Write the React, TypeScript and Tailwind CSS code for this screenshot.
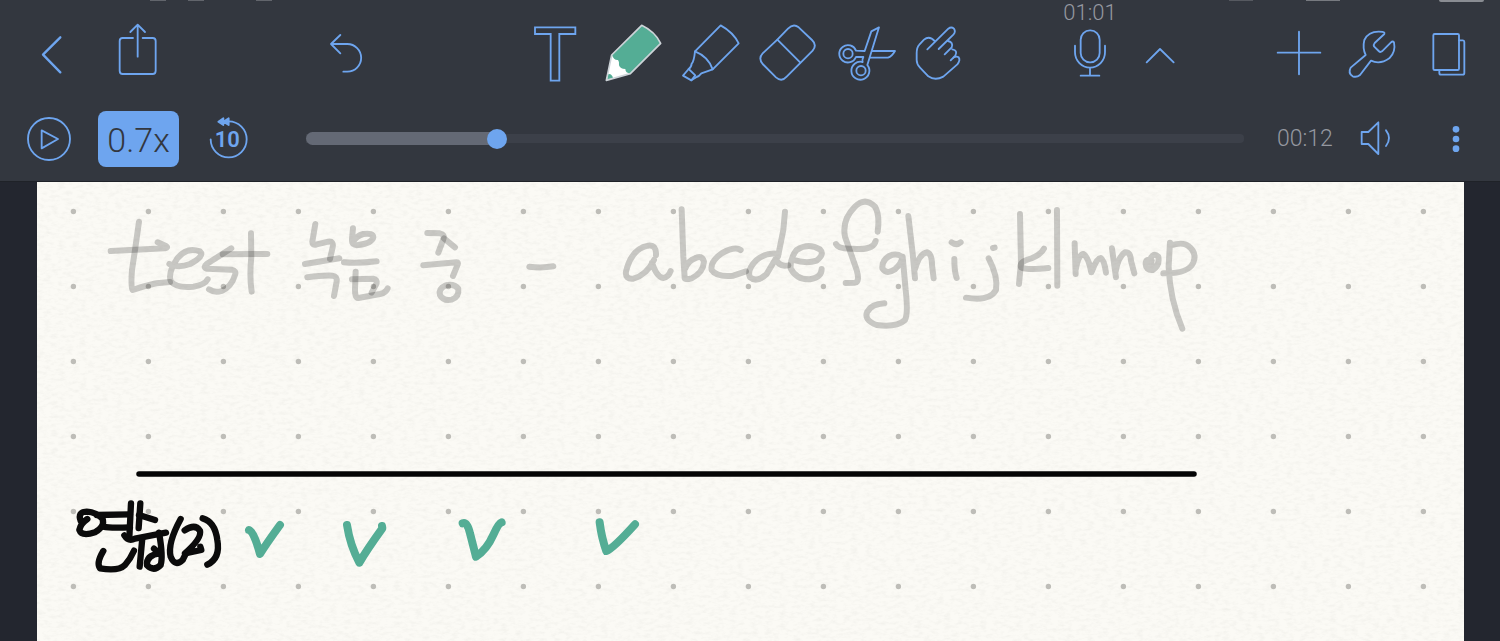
import { useState } from "react";
import type { ReactNode } from "react";

type IconProps = { box: string; children: ReactNode; className?: string };

// Toolbar glyphs share one grid: three drawing units per pixel
function Icon({ box, children, className = "h-14 w-14" }: IconProps) {
  return (
    <svg
      viewBox={box}
      fill="none"
      stroke="currentColor"
      strokeWidth="5.5"
      strokeLinecap="round"
      strokeLinejoin="round"
      aria-hidden="true"
      className={`shrink-0 overflow-visible ${className}`}
    >
      {children}
    </svg>
  );
}

type ToolButtonProps = { label: string; children: ReactNode; className?: string };

function ToolButton({ label, children, className = "w-14" }: ToolButtonProps) {
  return (
    <button type="button" aria-label={label} className={`flex shrink-0 justify-center ${className}`}>
      {children}
    </button>
  );
}

const wordStrokes = [
  "M147 95 L135 180 L126 240 Q122 290 128 300 Q175 284 200 280 L240 276",
  "M62 183 L225 175 Q236 173 228 168 L203 157",
  "M238 222 Q265 235 300 222 Q345 198 330 184 Q290 170 262 205 Q232 250 243 275 Q260 295 310 290 Q345 285 353 268",
  "M424 175 L350 222 Q338 232 350 236 L425 239 Q440 242 435 255 Q425 290 395 303 Q375 310 357 298",
  "M483 130 L484 200 Q478 260 485 305",
  "M398 193 L532 192",
  "M676 102 L667 155 Q667 168 680 163 L715 155 Q732 153 728 172 L720 207",
  "M645 222 L748 205",
  "M652 262 Q700 255 728 257 Q742 258 740 275 L732 318",
  "M789 115 L786 148 Q785 168 805 165 Q845 160 850 142 Q850 128 820 132 Q800 137 790 155",
  "M762 217 Q800 221 860 214",
  "M797 245 L795 300 Q795 325 805 324 L870 312 Q888 308 893 295",
  "M786 268 L850 266 Q862 268 860 280 L845 308",
  "M1012 129 L1050 130 Q1065 133 1060 148 L1045 188",
  "M1062 145 L1095 172",
  "M1000 226 L1100 217 Q1106 217 1103 224 L1089 258",
  "M1068 286 Q1045 296 1050 315 Q1060 334 1085 329 Q1108 322 1105 296 Q1092 280 1068 286",
];

const firstLetters = [
  "M88 230 Q125 235 160 229",
  "M468 195 Q470 165 445 167 Q395 175 378 245 Q375 268 400 266 Q440 255 462 210 M456 218 Q470 262 490 264 Q505 262 512 243",
  "M545 58 L550 200 L554 262 Q552 271 575 265 Q610 248 612 215 Q605 193 585 205 Q565 212 556 235",
  "M722 180 Q705 168 665 190 Q630 215 635 240 Q650 262 700 257 L738 244",
  "M855 65 L850 120 L834 200 M836 192 Q800 185 770 210 Q740 240 750 262 Q770 280 800 252 L828 205 Q835 232 865 226",
  "M880 210 Q920 222 950 212 Q975 192 960 178 Q925 157 890 180 Q870 205 872 235 Q890 270 930 268 Q965 262 965 237",
];

const lastLetters = [
  "M113 125 Q120 75 105 50 Q75 20 45 50 Q5 90 15 140 L50 240 Q60 275 45 278 L17 279",
  "M-12 162 Q-5 178 40 176 Q100 182 107 153",
  "M186 218 Q192 190 158 194 Q125 205 127 235 Q140 255 165 238 Q185 220 188 200 L197 300 Q205 370 195 390 Q170 413 110 405 Q70 390 82 365 Q95 342 133 340",
  "M205 78 L218 190 L225 265 M224 240 Q238 190 262 187 Q276 192 276 225 L281 265",
  "M343 207 Q343 245 350 264",
  "M335 157 Q350 168 362 157",
  "M446 205 Q475 260 468 300 Q450 335 378 323",
  "M459 174 L464 173",
  "M540 72 L543 220 L537 282",
  "M612 176 Q600 198 560 210 Q538 218 543 232 Q560 241 625 234",
  "M651 60 L652 287",
  "M704 160 L707 252 M707 240 Q715 195 730 192 Q745 200 754 247 M756 244 Q770 204 782 204 Q793 210 798 248",
  "M816 175 L828 262 M827 245 Q835 200 855 187 Q872 185 873 212 L883 250",
  "M935 212 Q917 204 917 222 Q918 242 938 240 Q960 228 955 200 Q940 185 931 208 L936 225",
  "M990 158 L986 230 Q990 330 1027 416 M992 166 Q1030 155 1045 168 Q1072 188 1060 218 Q1045 252 970 250",
];

const noteStrokes = [
  "M62 183 Q52 155 80 155 Q110 157 128 177 Q135 200 105 217 Q65 230 58 210 Q62 190 82 177",
  "M110 165 L210 163",
  "M130 200 Q150 205 210 202",
  "M213 130 L208 233",
  "M241 130 L236 204",
  "M237 165 L285 180",
  "M193 226 Q205 245 225 236 L318 218",
  "M247 235 L239 320",
  "M282 266 L298 280 Q258 286 261 316 Q282 336 302 315 Q310 290 297 218",
  "M130 273 Q108 310 120 325 Q175 335 195 315 Q212 295 222 272",
  "M362 177 Q322 250 332 290 Q345 322 368 300 L378 280",
  "M374 211 Q405 190 420 212 Q426 235 375 280 L424 270 L421 260",
  "M428 175 Q465 185 472 240 Q482 295 442 314",
];

const checkStrokes = [
  "M51 105 Q60 165 88 218 Q110 180 157 115 L156 108",
  "M398 100 Q412 95 420 130 L438 200 Q470 180 490 135 Q505 100 515 97",
  "M809 97 Q815 145 829 183 Q850 175 915 103",
];

function Paper() {
  return (
    <main className="relative mr-9 ml-[37px] flex-1 overflow-hidden bg-[#fbfaf5]">
      <svg role="img" aria-label="Handwritten notes" className="absolute inset-0 h-full w-full">
        <defs>
          <filter id="grain" x="0" y="0" width="100%" height="100%">
            <feTurbulence type="fractalNoise" baseFrequency="0.14 0.3" numOctaves="3" seed="4" />
            <feColorMatrix values="0 0 0 0 0.5  0 0 0 0 0.5  0 0 0 0 0.46  0.8 0 0 0 -0.34" />
          </filter>
          <pattern id="dots" x="-1" y="-8" width="75" height="75" patternUnits="userSpaceOnUse">
            <circle cx="37.4" cy="37.5" r="2.7" fill="#bebdb8" />
          </pattern>
        </defs>
        <rect width="100%" height="100%" filter="url(#grain)" opacity="0.35" />
        <rect width="100%" height="100%" fill="url(#dots)" />

        <g fill="none" strokeLinecap="round" strokeLinejoin="round" strokeWidth="18">
          {/* Ink that has not been replayed yet is faded */}
          <g stroke="#000000" strokeOpacity="0.2">
            <g transform="translate(53 8) scale(0.3333)">
              {wordStrokes.map((d) => <path key={d} d={d} />)}
            </g>
            <g transform="translate(463 8) scale(0.3333)">
              {firstLetters.map((d) => <path key={d} d={d} />)}
            </g>
            <g transform="translate(803 8) scale(0.3333)">
              {lastLetters.map((d) => <path key={d} d={d} />)}
            </g>
          </g>

          <path d="M102 292 H1157" stroke="#050505" strokeWidth="5.5" />
          <g stroke="#0b0b0b" strokeWidth="19" transform="translate(23 278) scale(0.3333)">
            {noteStrokes.map((d) => <path key={d} d={d} />)}
          </g>

          <g stroke="#54ad95" strokeWidth="24">
            <path d="M567 210 Q582 215 600 282 Q620 250 660 195" transform="translate(23 278) scale(0.3333)" />
            <g transform="translate(293 308) scale(0.3333)">
              {checkStrokes.map((d) => <path key={d} d={d} />)}
            </g>
          </g>
        </g>
      </svg>
    </main>
  );
}

// Lower edge of the system status bar, mostly scrolled off the top
function StatusEdge() {
  return (
    <div className="absolute inset-x-0 top-0 flex h-px justify-between pr-4 pl-[150px]" aria-hidden="true">
      <div className="flex">
        <span className="w-4 bg-[#62656c]" />
        <span className="ml-[22px] w-4 bg-[#62656c]" />
        <span className="ml-[52px] w-4 bg-[#62656c]" />
      </div>
      <div className="flex">
        <span className="w-6 bg-[#565960]" />
        <span className="ml-[53px] w-[34px] bg-[#777a80]" />
        <span className="ml-[99px] h-0.5 w-[45px] rounded-b bg-[#8a8d93]" />
      </div>
    </div>
  );
}

function Toolbar() {
  return (
    <div className="grid grid-cols-[1fr_auto_1fr] items-end">
      <div className="flex gap-[30px] pl-6">
        <ToolButton label="Back">
          <Icon box="72 78 168 168">
            <path d="M181 112 L129 164 L181 217" strokeWidth="7" />
          </Icon>
        </ToolButton>
        <ToolButton label="Share">
          <Icon box="330 78 168 168">
            <path d="M399 114 H368 Q359 114 359 123 V212 Q359 222 368 222 H458 Q467 222 467 212 V123 Q467 114 458 114 H428" />
            <path d="M413 170 V74 M391 96 L413 74 L435 96" />
          </Icon>
        </ToolButton>
        <ToolButton label="Undo" className="mr-[142px] ml-auto w-14">
          <Icon box="954 78 168 168">
            <path d="M1021 105 L993 132 L1021 160 M993 132 H1042 A41 41 0 0 1 1042 215 H1030" />
          </Icon>
        </ToolButton>
      </div>

      <div className="flex pr-3.5">
        <ToolButton label="Text" className="w-[78px]">
          <Icon box="81 78 168 168">
            <path d="M105 82 H226 V102 H178 V242 H152 V102 H105 Z" strokeLinejoin="miter" />
          </Icon>
        </ToolButton>
        <ToolButton label="Pen" className="w-[78px]">
          <Icon box="315 78 168 168">
            <path d="M335 165 L425 76 Q465 95 482 130 L391 221 L319 241 Z" fill="#ffffff" stroke="none" />
            <path
              d="M336 165 L425 76 Q465 95 482 130 L391 221 Q376 219 376 207 Q360 207 357 196 Q359 186 354 180 Q341 181 336 165 Z"
              fill="#54ad95"
              stroke="none"
            />
            <path d="M321 239 L325 222 Q335 220 339 234 Z" fill="#54ad95" stroke="none" />
            <path d="M335 165 L425 76 Q465 95 482 130 L391 221 L319 241 Z" stroke="#cdd3d8" strokeWidth="5" />
          </Icon>
        </ToolButton>
        <ToolButton label="Highlighter" className="w-[78px]">
          <Icon box="549 78 168 168">
            <path d="M585 154 L662 76 Q700 97 716 130 L638 208 Q625 170 585 154 Z" />
            <path d="M585 154 Q582 184 575 191 Q574 202 566 207 L549 227 L574 241 L590 231 Q596 230 604 220 L638 208" />
            <path d="M566 207 L586 226 L574 241" />
          </Icon>
        </ToolButton>
        <ToolButton label="Eraser" className="w-[78px]">
          <Icon box="783 78 168 168">
            <path d="M832 119 L864 86 Q880 69 896 82 L936 120 Q952 135 938 152 L860 230 Q845 247 828 232 L788 192 Q774 175 788 160 Z" />
            <path d="M832 119 L901 188" />
          </Icon>
        </ToolButton>
        <ToolButton label="Cut" className="w-[78px]">
          <Icon box="177 78 168 168">
            <path d="M228 152 A26 26 0 1 0 228 171 H250 Q246 178 248 186 A27 27 0 1 0 262 195 L297 82 L274 94 L254 153 Z" />
            <path d="M276 153 H345 Q335 170 324 173 H270" />
            <circle cx="204" cy="161" r="14" />
            <circle cx="243" cy="212" r="14" />
          </Icon>
        </ToolButton>
        <ToolButton label="Hand" className="w-16">
          <Icon box="390 78 168 168">
            <path d="M442 148 L505 86 Q514 79 522 86 Q528 95 520 104 L476 147" />
            <path d="M465 124 Q448 105 432 119 L418 134 Q410 142 410 160 V180 Q410 193 420 203 L445 229 Q465 243 490 230 L532 193 Q542 180 536 172 Q526 165 512 181" />
            <path d="M504 123 Q521 127 515 142 L494 163 M517 148 Q534 151 526 167 L520 173" />
          </Icon>
        </ToolButton>
      </div>

      <div className="flex items-end pr-6 pl-[78px]">
        <div className="flex w-14 flex-col items-center">
          <time className="text-[22px] leading-[26px] font-light text-[#9598a0]">01:01</time>
          <ToolButton label="Record">
            <Icon box="96 78 168 168">
              <rect x="152" y="91" width="57" height="96" rx="28" />
              <path d="M135 137 V157 A45 46 0 0 0 225 157 V137 M180 203 V227 M152 227 H208" />
            </Icon>
          </ToolButton>
        </div>
        <ToolButton label="Hide playback" className="ml-3.5 w-14">
          <Icon box="306 78 168 168">
            <path d="M350 187 L390 147 L431 187" />
          </Icon>
        </ToolButton>
        <div className="ml-auto flex gap-[18px]">
          <ToolButton label="Add">
            <Icon box="726 78 168 168">
              <path d="M807 95 V223 M743 158 H871" />
            </Icon>
          </ToolButton>
          <ToolButton label="Settings">
            <Icon box="948 78 168 168">
              <path d="M1063 98 Q1060 95 1046 95 Q1015 95 1003 120 Q997 145 1007 165 L962 203 Q953 220 968 229 Q980 233 990 225 L1023 182 Q1050 195 1078 175 Q1098 155 1092 127 Q1088 122 1083 127 L1056 154 Q1051 158 1046 153 L1032 139 Q1030 134 1034 129 L1063 102 Z" />
            </Icon>
          </ToolButton>
          <ToolButton label="Pages">
            <Icon box="1170 78 168 168">
              <rect x="1210" y="102" width="77" height="108" rx="4" />
              <path d="M1287 121 H1299 Q1303 121 1303 126 V219 Q1303 224 1298 224 H1233 Q1228 224 1228 219 V210" />
            </Icon>
          </ToolButton>
        </div>
      </div>
    </div>
  );
}

function Playback() {
  const total = 61;
  const [seconds, setSeconds] = useState(12);

  return (
    <div className="flex h-[99px] items-center pt-3.5 pr-[22px] pl-[27px]">
      <div className="flex items-center gap-[27px]">
        <ToolButton label="Play" className="w-11">
          <Icon box="81 351 132 132" className="h-11 w-11">
            <circle cx="147" cy="417" r="63" />
            <path d="M125 391 L174 417 L125 445 Z" />
          </Icon>
        </ToolButton>
        <button
          type="button"
          className="h-14 w-[81px] rounded-lg bg-[#6ea5ef] pt-1 text-center text-[34px] font-light text-[#33373f]"
        >
          0.7x
        </button>
        <ToolButton label="Rewind 10 seconds" className="w-11">
          <Icon box="618 351 132 132" className="h-11 w-11">
            <path d="M632 418 A54 54 0 1 0 686 364" />
            <path d="M655 365 L670 355 V375 Z M670 365 L686 355 V375 Z" fill="currentColor" />
            <text
              x="682"
              y="441"
              textAnchor="middle"
              fill="currentColor"
              stroke="none"
              className="font-[Roboto,sans-serif] text-[66px] font-semibold"
            >
              10
            </text>
          </Icon>
        </ToolButton>
      </div>

      <div className="relative mr-[33px] ml-14 flex h-5 flex-1 items-center">
        <div className="h-[9px] w-full rounded-r-sm bg-[#3c4049]" />
        <div
          className="absolute h-[13px] rounded-l-full bg-[#646975]"
          style={{ width: `${(seconds / total) * 100}%` }}
        />
        <input
          type="range"
          aria-label="Position"
          min={0}
          max={total}
          value={seconds}
          onChange={(e) => setSeconds(Number(e.target.value))}
          className="absolute inset-0 h-5 w-full appearance-none bg-transparent [&::-webkit-slider-thumb]:h-5 [&::-webkit-slider-thumb]:w-5 [&::-webkit-slider-thumb]:appearance-none [&::-webkit-slider-thumb]:rounded-full [&::-webkit-slider-thumb]:bg-[#6ea5ef]"
        />
      </div>

      <time className="w-14 pt-0.5 text-[23px] font-light text-[#9598a0]">00:{String(seconds).padStart(2, "0")}</time>
      <ToolButton label="Volume" className="ml-[21px] w-11">
        <Icon box="972 351 132 132" className="h-11 w-11">
          <path d="M995 396 H1015 L1045 367 V462 L1015 432 H995 Z" />
          <path d="M1068 391 Q1086 414 1068 438" />
        </Icon>
      </ToolButton>
      <ToolButton label="More" className="ml-9 w-11">
        <Icon box="1212 351 132 132" className="h-11 w-11">
          <g fill="currentColor" stroke="none">
            <circle cx="1278" cy="388" r="10" />
            <circle cx="1278" cy="417" r="10" />
            <circle cx="1278" cy="446" r="10" />
          </g>
        </Icon>
      </ToolButton>
    </div>
  );
}

export default function App() {
  return (
    <div className="flex min-h-screen flex-col bg-[#23262f] font-[Roboto,sans-serif]">
      <header className="relative border-b border-[#1f2228] bg-[#33373f] text-[#6ea5ef]">
        <StatusEdge />
        <Toolbar />
        <Playback />
      </header>
      <Paper />
    </div>
  );
}
